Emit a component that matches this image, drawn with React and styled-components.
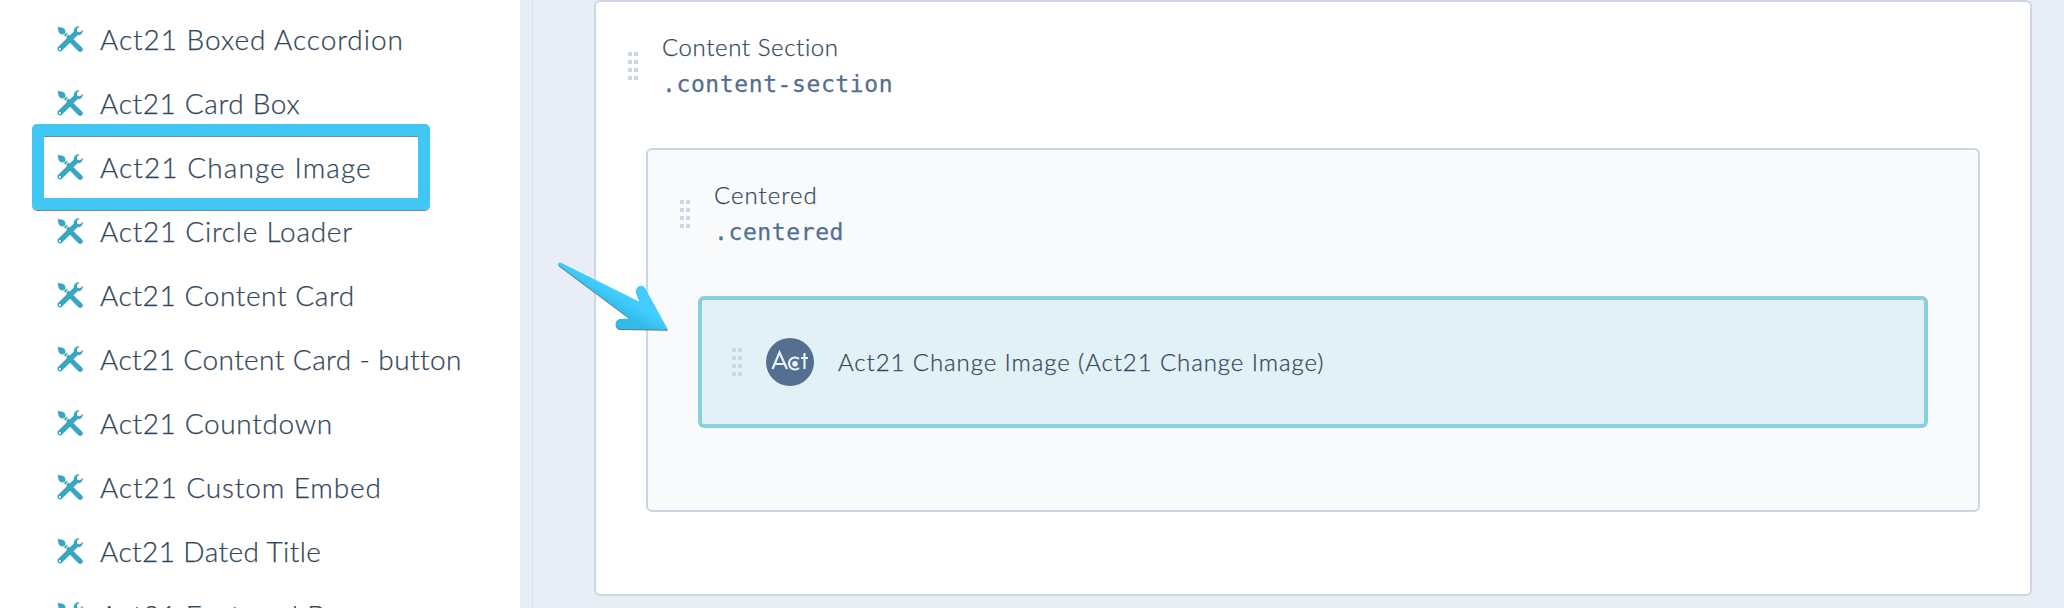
import React from "react";
import styled, { createGlobalStyle, css } from "styled-components";

const GlobalStyle = createGlobalStyle`
  * {
    box-sizing: border-box;
  }

  body {
    margin: 0;
    background: #e9eef6;
    color: #33475b;
    font-family: Lato, "Open Sans", sans-serif;
    font-weight: 300;
    -webkit-text-stroke: 0.25px currentColor;
  }
`;

const Page = styled.div`
  position: relative;
  display: flex;
  height: 608px;
  overflow: hidden;
`;

const Sidebar = styled.aside`
  width: 520px;
  height: 100%;
  padding-top: 8px;
  background: #fff;
  flex-shrink: 0;
`;

const Divider = styled.div`
  width: 13px;
  background: #e6eef6;
  border-right: 1px solid #dbe0ea;
  flex-shrink: 0;
`;

const Canvas = styled.main`
  flex: 1;
  padding: 0 32px 12px 61px;
`;

const ModuleList = styled.ul`
  margin: 0;
  padding: 0;
  list-style: none;
`;

const ModuleItem = styled.li`
  position: relative;
  display: flex;
  align-items: center;
  gap: 17px;
  height: 64px;
  padding-left: 57px;

  svg {
    margin-top: -2px;
    flex-shrink: 0;
  }
`;

const ModuleName = styled.span`
  padding-bottom: 2px;
  font-size: 28px;
  line-height: 36px;
  white-space: nowrap;
  letter-spacing: ${(props) => props.$tracking}px;
`;

// callout frame drawn over the neighbouring rows
const Highlight = styled.div`
  position: absolute;
  left: 32px;
  top: -12px;
  width: 398px;
  height: 86px;
  border: 12px solid #40c7f4;
  border-radius: 5px;
  box-shadow: 0 1px 0 #7d868c, inset 0 1px 0 #7d868c;
`;

const Box = styled.section`
  border: 2px solid #cdd6e4;
  border-radius: 6px;
  padding: 0 50px;
  background: ${(props) => (props.$nested ? "#f9fafc" : "#fff")};
  height: ${(props) => (props.$nested ? 364 : 596)}px;
`;

const BoxHeader = styled.header`
  display: flex;
  align-items: center;
  gap: 24px;
  height: 146px;
  margin-left: -18px;
  padding-bottom: 18px;
`;

const Titles = styled.div`
  display: flex;
  flex-direction: column;
  gap: 1px;
  padding-bottom: 1px;
`;

const labelText = css`
  font-size: 24px;
  line-height: 36px;
  white-space: nowrap;
`;

const Title = styled.div`
  ${labelText}
  letter-spacing: ${(props) => props.$tracking}px;
`;

const ClassName = styled.code`
  ${labelText}
  font-family: "DejaVu Sans Mono", monospace;
  font-size: 23px;
  font-weight: 400;
  letter-spacing: 0.6px;
  color: #516f90;
`;

const Dots = styled.div`
  display: grid;
  grid-template-columns: 4px 4px;
  grid-auto-rows: 4px;
  gap: 4px 2px;
  flex-shrink: 0;

  i {
    background: #cdd6e4;
  }
`;

const ModuleCard = styled.div`
  display: flex;
  align-items: center;
  height: 132px;
  padding-left: 30px;
  background: #e2f1f5;
  border: 4px solid #8ad0dc;
  border-radius: 6px;

  ${Title} {
    padding-bottom: 1px;
  }
`;

const Badge = styled.div`
  width: 48px;
  height: 48px;
  margin: 0 24px;
  border-radius: 50%;
  background: #546f90;
  flex-shrink: 0;
`;

const Arrow = styled.svg`
  position: absolute;
  left: 550px;
  top: 256px;

  path {
    filter: drop-shadow(0 1px 0 #68757d);
  }
`;

const modules = [
  { name: "Act21 Boxed Accordion", tracking: 0.95 },
  { name: "Act21 Card Box", tracking: 0.65 },
  { name: "Act21 Change Image", tracking: 1.08, highlighted: true },
  { name: "Act21 Circle Loader", tracking: 0.75 },
  { name: "Act21 Content Card", tracking: 0.6 },
  { name: "Act21 Content Card - button", tracking: 0.42 },
  { name: "Act21 Countdown", tracking: 0.65 },
  { name: "Act21 Custom Embed", tracking: 0.89 },
  { name: "Act21 Dated Title", tracking: 0.42 },
  { name: "Act21 Featured Box", tracking: 0.8 },
];

function ToolsIcon() {
  return (
    <svg width="26" height="26" viewBox="0 0 26 26" fill="#3aa6bf">
      <path d="M.7.4C3.2 1.8 5.8 1 7.6 3.1 8.8 4.6 8.6 6.3 7.9 7.5 6.2 8.8 4.2 8.7 2.8 7.4.9 5.6 1.3 3.1.7.4Z" />
      <path d="M9.4 6.6 10.9 8 8.2 10.5 6.9 9.3Z" />
      <path d="M22.6.4 19.9 3.1 20.4 5.8 23 6.3 25.7 3.7C26.3 7 23.7 9.5 20.6 9.2L4.8 24.8C2.6 27-1.2 23.5 1 21.1L16.8 5.5C16.5 2.3 19.3-.4 22.6.4ZM2.8 22A1 1 0 1 0 2.8 24 1 1 0 1 0 2.8 22Z" fillRule="evenodd" />
      <path d="M15.2 12 25.1 21.4C27.5 24 24 27.5 21.4 25.2L11.7 15.5ZM11.5 8.6 13.4 10.3 10.7 12.8 9 11.1Z" />
    </svg>
  );
}

function DragHandle() {
  return (
    <Dots>
      {[...Array(8)].map((_, index) => (
        <i key={`dot${index}`} />
      ))}
    </Dots>
  );
}

function ActLogo() {
  return (
    <Badge>
      <svg width="48" height="48" viewBox="0 0 48 48" fill="none" stroke="#e9f4f8" strokeWidth="2.2">
        <path d="M6.5 31 13.5 14.5 21 31M9 26H18.5" />
        <path d="M33 21A6 6 0 1 0 33 30" />
        <path d="M38.5 15V31M35 20H42" />
        <circle cx="29" cy="25.7" r="2.8" fill="#e9f4f8" stroke="none" />
      </svg>
    </Badge>
  );
}

function PointerArrow() {
  return (
    <Arrow width="126" height="84" viewBox="550 256 126 84">
      <defs>
        <linearGradient id="arrowFill" gradientUnits="userSpaceOnUse" x1="640" y1="300" x2="627" y2="322">
          <stop offset="0.25" stopColor="#41cdff" />
          <stop offset="0.85" stopColor="#30bbe9" />
        </linearGradient>
      </defs>
      <path
        d="M560.5 262.6 640 302 636.4 292.5C634.8 286.5 642 283.3 645 288L668 329.8 620 329C614.2 328 614.3 319.6 620 319L630 318.6 559 265.5C557.5 263.5 559 262 560.5 262.6Z"
        fill="url(#arrowFill)"
      />
    </Arrow>
  );
}

function App() {
  return (
    <Page>
      <GlobalStyle />
      <Sidebar>
        <ModuleList>
          {modules.map((item) => (
            <ModuleItem key={item.name}>
              {item.highlighted && <Highlight />}
              <ToolsIcon />
              <ModuleName $tracking={item.tracking}>{item.name}</ModuleName>
            </ModuleItem>
          ))}
        </ModuleList>
      </Sidebar>
      <Divider />
      <Canvas>
        <Box>
          <BoxHeader>
            <DragHandle />
            <Titles>
              <Title $tracking={0.6}>Content Section</Title>
              <ClassName>.content-section</ClassName>
            </Titles>
          </BoxHeader>
          <Box $nested>
            <BoxHeader>
              <DragHandle />
              <Titles>
                <Title $tracking={1}>Centered</Title>
                <ClassName>.centered</ClassName>
              </Titles>
            </BoxHeader>
            <ModuleCard>
              <DragHandle />
              <ActLogo />
              <Title $tracking={0.91}>Act21 Change Image (Act21 Change Image)</Title>
            </ModuleCard>
          </Box>
        </Box>
      </Canvas>
      <PointerArrow />
    </Page>
  );
}

export default App;
